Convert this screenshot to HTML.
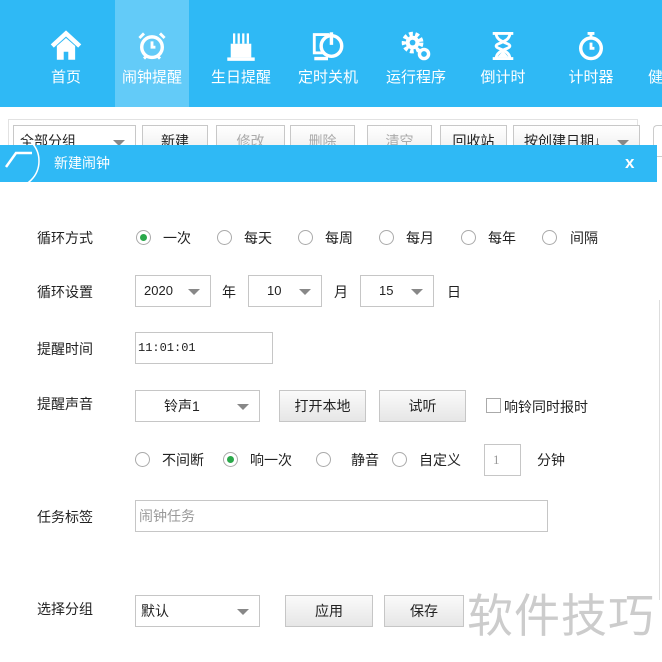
<!DOCTYPE html>
<html><head><meta charset="utf-8"><style>
*{margin:0;padding:0;box-sizing:border-box}
body{width:662px;height:662px;overflow:hidden;background:#fff;position:relative;font-family:"Liberation Sans","Noto Sans CJK SC",sans-serif;font-size:14px;color:#222}
.top{position:absolute;left:0;top:0;width:662px;height:107px;background:#2fb9f5}
.nav{position:absolute;top:0;height:107px;text-align:center;color:#fff;font-size:15px}
.nav .t{position:absolute;top:66px;left:0;right:0}
.nav svg{position:absolute;top:30px;left:50%;margin-left:-16px}
.sel{background:#63cbf8}
.tb{position:absolute;top:125px;height:32px;border:1px solid #c8c8c8;background:linear-gradient(#fff,#ececec);font-size:14px;text-align:center;line-height:30px;color:#222}
.g{color:#aaa}
.hdr{position:absolute;left:0;top:145px;width:657px;height:37px;background:#2fb9f5;color:#fff;font-size:14px}
.abs{position:absolute}
.lbl{position:absolute;left:37px;font-size:14px}
.box{position:absolute;border:1px solid #c6c6c6;background:#fff;height:32px;line-height:30px;font-size:13px;padding-left:8px}
.arr{position:absolute;right:10px;top:13px;width:0;height:0;border-left:6px solid transparent;border-right:6px solid transparent;border-top:6px solid #888}
.btn{position:absolute;border:1px solid #c6c6c6;background:linear-gradient(#fafafa,#e6e6e6);height:32px;line-height:30px;text-align:center;font-size:14px}
.r{position:absolute;width:15px;height:15px;border:1px solid #aaa;border-radius:50%;background:#fff}
.r.on::after{content:"";position:absolute;left:3px;top:3px;width:7px;height:7px;border-radius:50%;background:#2aa84a}
</style></head><body>
<div class="top"></div>
<div class="nav" style="left:26px;width:80px"><svg width="32" height="32" viewBox="0 0 28 28"><path d="M2 14L14 3 26 14" stroke="#fff" stroke-width="4" fill="none"/><path d="M6 14v12h6v-7h4v7h6V14L14 7z" fill="#fff"/></svg><div class="t">首页</div></div>
<div class="nav sel" style="left:115px;width:74px"><svg width="32" height="32" viewBox="0 0 28 28"><circle cx="14" cy="15" r="9" stroke="#fff" stroke-width="3" fill="none"/><path d="M14 10v5h3M3 7l4-4M25 7l-4-4M7 25l2-2M21 25l-2-2" stroke="#fff" stroke-width="2.5" fill="none"/></svg><div class="t">闹钟提醒</div></div>
<div class="nav" style="left:201px;width:80px"><svg width="32" height="32" viewBox="0 0 28 28"><path d="M8 3v9M12 3v9M16 3v9M20 3v9" stroke="#fff" stroke-width="2"/><rect x="5" y="12" width="18" height="12" fill="#fff"/><rect x="2" y="24" width="24" height="3" fill="#fff"/></svg><div class="t">生日提醒</div></div>
<div class="nav" style="left:288px;width:80px"><svg width="32" height="32" viewBox="0 0 28 28"><rect x="2" y="4" width="12" height="16" stroke="#fff" stroke-width="2.5" fill="none"/><circle cx="17" cy="14" r="9" stroke="#fff" stroke-width="3" fill="#2fb9f5"/><path d="M17 2v11" stroke="#fff" stroke-width="3"/><path d="M2 25h12" stroke="#fff" stroke-width="3"/></svg><div class="t">定时关机</div></div>
<div class="nav" style="left:376px;width:80px"><svg width="32" height="32" viewBox="0 0 28 28"><circle cx="11" cy="11" r="7" stroke="#fff" stroke-width="5" stroke-dasharray="3 2" fill="none"/><circle cx="11" cy="11" r="6" fill="#fff"/><circle cx="11" cy="11" r="2.5" fill="#2fb9f5"/><circle cx="21" cy="21" r="4" stroke="#fff" stroke-width="3" fill="none"/></svg><div class="t">运行程序</div></div>
<div class="nav" style="left:463px;width:80px"><svg width="32" height="32" viewBox="0 0 28 28"><path d="M5 3h18M5 25h18M8 3c0 8 12 8 12 11S8 17 8 25M20 3c0 8-12 8-12 11s12 3 12 11" stroke="#fff" stroke-width="2.5" fill="none"/><path d="M9 24l5-6 5 6z" fill="#fff"/></svg><div class="t">倒计时</div></div>
<div class="nav" style="left:551px;width:80px"><svg width="32" height="32" viewBox="0 0 28 28"><circle cx="14" cy="16" r="9" stroke="#fff" stroke-width="3" fill="none"/><path d="M11 3h6M14 3v4M14 11v5h3" stroke="#fff" stroke-width="2.5" fill="none"/></svg><div class="t">计时器</div></div>
<div class="nav" style="left:640px;width:40px"><div class="t" style="text-align:left;left:8px">健</div></div>
<div class="abs" style="left:8px;top:119px;width:630px;height:30px;border:1px solid #e2e2e2;border-bottom:none"></div>
<div class="tb" style="left:13px;width:123px;text-align:left;padding-left:6px;background:#fff">全部分组<span class="arr" style="top:14px"></span></div>
<div class="tb" style="left:142px;width:66px">新建</div>
<div class="tb g" style="left:216px;width:69px">修改</div>
<div class="tb g" style="left:290px;width:65px">删除</div>
<div class="tb g" style="left:367px;width:65px">清空</div>
<div class="tb" style="left:440px;width:67px">回收站</div>
<div class="tb" style="left:513px;width:127px;text-align:left;padding-left:10px">按创建日期↓<span class="arr" style="top:14px"></span></div>
<div class="abs" style="left:653px;top:125px;width:9px;height:32px;border:1px solid #ccc;border-right:none;border-radius:4px 0 0 4px"></div>
<div class="hdr"><svg class="abs" style="left:0;top:-10px" width="52" height="56" viewBox="0 0 52 56"><circle cx="12" cy="26" r="27" stroke="#fff" stroke-width="1.5" fill="none"/><path d="M6 32l10-14h16" stroke="#fff" stroke-width="2.5" fill="none"/></svg><span class="abs" style="left:54px;top:8px">新建闹钟</span><span class="abs" style="left:625px;top:8px;font-size:17px;font-weight:bold">x</span></div>
<div class="abs" style="left:659px;top:300px;width:1px;height:300px;background:#ddd"></div>

<div class="lbl" style="top:228px">循环方式</div>
<div class="r on" style="left:136px;top:230px"></div><span class="abs" style="left:163px;top:228px">一次</span>
<div class="r" style="left:217px;top:230px"></div><span class="abs" style="left:244px;top:228px">每天</span>
<div class="r" style="left:298px;top:230px"></div><span class="abs" style="left:325px;top:228px">每周</span>
<div class="r" style="left:379px;top:230px"></div><span class="abs" style="left:406px;top:228px">每月</span>
<div class="r" style="left:461px;top:230px"></div><span class="abs" style="left:488px;top:228px">每年</span>
<div class="r" style="left:542px;top:230px"></div><span class="abs" style="left:570px;top:228px">间隔</span>

<div class="lbl" style="top:282px">循环设置</div>
<div class="box" style="left:135px;top:275px;width:76px">2020<span class="arr"></span></div><span class="abs" style="left:222px;top:282px">年</span>
<div class="box" style="left:248px;top:275px;width:74px;padding-left:18px">10<span class="arr"></span></div><span class="abs" style="left:334px;top:282px">月</span>
<div class="box" style="left:360px;top:275px;width:74px;padding-left:18px">15<span class="arr"></span></div><span class="abs" style="left:447px;top:282px">日</span>

<div class="lbl" style="top:339px">提醒时间</div>
<div class="box" style="left:135px;top:332px;width:138px;padding-left:2px;font-family:'Liberation Mono',monospace;font-size:12px">11:01:01</div>

<div class="lbl" style="top:394px">提醒声音</div>
<div class="box" style="left:135px;top:390px;width:125px;padding-left:28px;font-size:14px">铃声1<span class="arr"></span></div>
<div class="btn" style="left:279px;top:390px;width:87px">打开本地</div>
<div class="btn" style="left:379px;top:390px;width:87px">试听</div>
<div class="abs" style="left:486px;top:398px;width:15px;height:15px;border:1px solid #aaa"></div><span class="abs" style="left:504px;top:397px">响铃同时报时</span>

<div class="r" style="left:135px;top:452px"></div><span class="abs" style="left:162px;top:450px">不间断</span>
<div class="r on" style="left:223px;top:452px"></div><span class="abs" style="left:250px;top:450px">响一次</span>
<div class="r" style="left:316px;top:452px"></div><span class="abs" style="left:351px;top:450px">静音</span>
<div class="r" style="left:392px;top:452px"></div><span class="abs" style="left:419px;top:450px">自定义</span>
<div class="box" style="left:484px;top:444px;width:37px;color:#999;font-family:'Liberation Serif',serif">1</div><span class="abs" style="left:537px;top:450px">分钟</span>

<div class="lbl" style="top:507px">任务标签</div>
<div class="box" style="left:135px;top:500px;width:413px;color:#999;font-size:14px;padding-left:3px">闹钟任务</div>

<div class="lbl" style="top:599px">选择分组</div>
<div class="box" style="left:135px;top:595px;width:125px;padding-left:5px;font-size:14px">默认<span class="arr"></span></div>
<div class="btn" style="left:285px;top:595px;width:88px">应用</div>
<div class="btn" style="left:384px;top:595px;width:80px">保存</div>
<span class="abs" style="left:467px;top:580px;font-size:46px;color:#ccc;letter-spacing:1px">软件技巧</span>
</body></html>
